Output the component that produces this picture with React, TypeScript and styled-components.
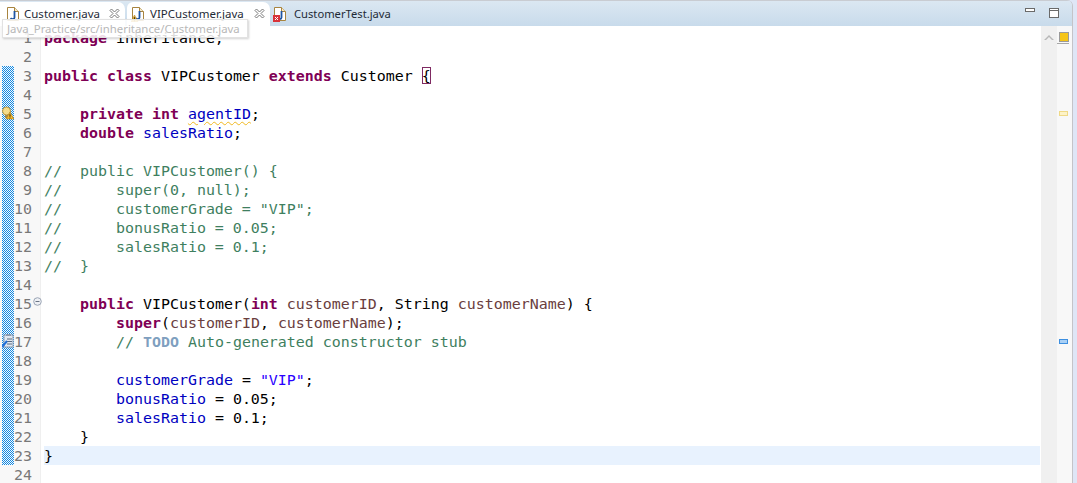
import styled, { createGlobalStyle } from "styled-components";

const GlobalStyle = createGlobalStyle`
  html, body {
    margin: 0;
    padding: 0;
    background: #fff;
  }
`;

const Page = styled.div`
  position: relative;
  width: 1077px;
  height: 483px;
  overflow: hidden;
  background: #dfe6f6;
  padding-right: 4px;
  box-sizing: border-box;
`;

const Frame = styled.div`
  height: 100%;
  display: flex;
  flex-direction: column;
  border-right: 1px solid #c4c4c8;
  border-top-right-radius: 6px;
  overflow: hidden;
`;

const TabBar = styled.div`
  height: 26px;
  flex: none;
  display: flex;
  align-items: stretch;
  padding-top: 1px;
  box-sizing: border-box;
  background: linear-gradient(#dbe7f2, #c8dbeb);
  border-top: 1px solid #c9ccd2;
`;

const Tab = styled.div<{ $kind: "plain" | "active" | "idle"; $width: number; $pad: number }>`
  width: ${(p) => p.$width}px;
  flex: none;
  box-sizing: border-box;
  display: flex;
  align-items: center;
  padding-left: ${(p) => p.$pad}px;
  padding-bottom: 1px;
  background: ${(p) => (p.$kind === "idle" ? "transparent" : "#fff")};
  border-top-left-radius: ${(p) => (p.$kind === "active" ? 6 : 0)}px;
  border-top-right-radius: ${(p) => (p.$kind === "idle" ? 0 : 7)}px;
  margin-right: ${(p) => (p.$kind === "plain" ? 2 : 0)}px;
`;

const TabLabel = styled.span<{ $gap: number; $size: number }>`
  margin-left: ${(p) => p.$gap}px;
  font-family: "Noto Sans", sans-serif;
  font-size: ${(p) => p.$size}px;
  color: #1e2a36;
  white-space: nowrap;
`;

const CloseIcon = styled.svg`
  margin-left: auto;
  margin-right: 5px;
  flex: none;
`;

const TabIconWrap = styled.span`
  position: relative;
  width: 14px;
  height: 16px;
  flex: none;
  display: block;
`;

const WindowControls = styled.div`
  margin-left: auto;
  padding: 6px 13px 0 0;
  display: flex;
  gap: 14px;
  align-items: flex-start;
`;

const Tooltip = styled.div`
  position: absolute;
  left: 2px;
  top: 19px;
  width: 246px;
  height: 19px;
  box-sizing: border-box;
  padding-left: 4px;
  background: rgba(255, 255, 255, 0.86);
  border: 1px solid #e2e2e2;
  box-shadow: 1px 1px 2px rgba(0, 0, 0, 0.18);
  font-family: "Noto Sans", sans-serif;
  font-size: 11.4px;
  line-height: 17px;
  color: #b8b8b8;
  white-space: nowrap;
`;

const Editor = styled.div`
  flex: 1;
  min-height: 0;
  display: flex;
  background: #fff;
`;

const LeftEdge = styled.div`
  width: 2px;
  flex: none;
  background: #f8f8f8;
`;

const ChangeRuler = styled.div`
  width: 12px;
  flex: none;
  padding-top: 40px;
  background: #f8f8f8;
`;

const ChangeBlock = styled.svg`
  display: block;
`;

const Numbers = styled.div`
  width: 27px;
  flex: none;
  padding-top: 2px;
  box-sizing: border-box;
  background: #f8f8f8;
  border-right: 1px solid #efefef;
`;

const NumberCell = styled.div`
  position: relative;
  height: 19px;
  width: 18px;
  text-align: right;
  font: 14.95px/21px "DejaVu Sans Mono", monospace;
  color: #787878;
`;

const FoldIcon = styled.svg`
  position: absolute;
  left: 19px;
  top: 3px;
`;

const Code = styled.div`
  flex: 1;
  min-width: 0;
  padding-top: 2px;
  margin-left: 3px;
  margin-right: 1px;
`;

const Line = styled.div<{ $current?: boolean }>`
  height: 19px;
  font: 14.95px/21px "DejaVu Sans Mono", monospace;
  white-space: pre;
  color: #000;
  background: ${(p) => (p.$current ? "#e8f2fe" : "transparent")};
`;

const Kw = styled.span`
  color: #7f0055;
  font-weight: bold;
`;

const Field = styled.span`
  color: #0000c0;
`;

const Param = styled.span`
  color: #6a3e3e;
`;

const Comment = styled.span`
  color: #3f7f5f;
`;

const Str = styled.span`
  color: #2a00ff;
`;

const Todo = styled.span`
  color: #7f9fbf;
  font-weight: bold;
`;

const Warn = styled.span`
  color: #0000c0;
  text-decoration: underline wavy #f0b820 1px;
  text-underline-offset: 2px;
`;

const Bracket = styled.span`
  display: inline-block;
  height: 17px;
  line-height: 19px;
  vertical-align: top;
  margin-top: 1px;
  outline: 1px solid #7f2a62;
  outline-offset: -1px;
`;

const ScrollTrack = styled.div`
  width: 16px;
  flex: none;
  background: #f0f0f0;
  display: flex;
  justify-content: center;
  padding-top: 8px;
  box-sizing: border-box;
`;

const Overview = styled.div`
  position: relative;
  width: 15px;
  flex: none;
  background: #f8f8f8;
`;

const StatusBox = styled.div`
  position: absolute;
  left: 2px;
  top: 6px;
  width: 8px;
  height: 8px;
  background: #f5c518;
  border: 1px solid #9a9a9a;
`;

const StatusRule = styled.div`
  position: absolute;
  left: 0;
  top: 17px;
  width: 12px;
  height: 1px;
  background: #a8a8a8;
`;

const Marker = styled.div<{ $top: number; $fill: string; $edge: string }>`
  position: absolute;
  left: 2px;
  top: ${(p) => p.$top}px;
  width: 7px;
  height: 3px;
  background: ${(p) => p.$fill};
  border: 1px solid ${(p) => p.$edge};
`;

const GutterIcon = styled.svg<{ $top: number }>`
  position: absolute;
  left: 2px;
  top: ${(p) => p.$top}px;
`;

function JavaFile({ error, warn }: { error?: boolean; warn?: boolean }) {
  return (
    <TabIconWrap>
      <svg width="14" height="16" viewBox="0 0 14 16">
        <path d="M1.5 1.5h7l4 4v9h-11z" fill="#fff" stroke="#a8843f" />
        <path d="M8.5 1.5v4h4" fill="#f5e9c8" stroke="#a8843f" />
        <path d="M8.5 5v6.5c0 1.8-2.8 2-4 .7" fill="none" stroke="#1f56a4" strokeWidth="1.8" />
        {error && (
          <g>
            <rect x="0" y="9" width="7" height="7" fill="#d8333a" />
            <path d="M2 11l3 3M5 11l-3 3" stroke="#fff" strokeWidth="1" />
          </g>
        )}
        {warn && (
          <g>
            <path d="M3.5 9l3.5 7H0z" fill="#e8b030" stroke="#a87a18" strokeWidth="0.5" />
            <path d="M3.5 11.2v2.4M3.5 14.4v.8" stroke="#3a2a08" strokeWidth="0.9" />
          </g>
        )}
      </svg>
    </TabIconWrap>
  );
}

function Close() {
  return (
    <CloseIcon width="11" height="11" viewBox="0 0 11 11">
      <path
        d="M1 2.5L2.5 1 5.5 4 8.5 1 10 2.5 7 5.5 10 8.5 8.5 10 5.5 7 2.5 10 1 8.5 4 5.5z"
        fill="#fff"
        stroke="#777"
      />
    </CloseIcon>
  );
}

const I = "    ";

const lines: React.ReactNode[] = [
  <><Kw>package</Kw> inheritance;</>,
  "",
  <><Kw>public</Kw> <Kw>class</Kw> VIPCustomer <Kw>extends</Kw> Customer <Bracket>{"{"}</Bracket></>,
  "",
  <>{I}<Kw>private</Kw> <Kw>int</Kw> <Warn>agentID</Warn>;</>,
  <>{I}<Kw>double</Kw> <Field>salesRatio</Field>;</>,
  "",
  <Comment>{"//  public VIPCustomer() {"}</Comment>,
  <Comment>{"//      super(0, null);"}</Comment>,
  <Comment>{'//      customerGrade = "VIP";'}</Comment>,
  <Comment>{"//      bonusRatio = 0.05;"}</Comment>,
  <Comment>{"//      salesRatio = 0.1;"}</Comment>,
  <Comment>{"//  }"}</Comment>,
  "",
  <>{I}<Kw>public</Kw> VIPCustomer(<Kw>int</Kw> <Param>customerID</Param>, String <Param>customerName</Param>) {"{"}</>,
  <>{I}{I}<Kw>super</Kw>(<Param>customerID</Param>, <Param>customerName</Param>);</>,
  <>{I}{I}<Comment>// </Comment><Todo>TODO</Todo><Comment> Auto-generated constructor stub</Comment></>,
  "",
  <>{I}{I}<Field>customerGrade</Field> = <Str>"VIP"</Str>;</>,
  <>{I}{I}<Field>bonusRatio</Field> = 0.05;</>,
  <>{I}{I}<Field>salesRatio</Field> = 0.1;</>,
  <>{I}{"}"}</>,
  "}",
  "",
];

export default function App() {
  return (
    <Page>
      <GlobalStyle />
      <Frame>
        <TabBar>
          <Tab $kind="plain" $width={125} $pad={6}>
            <JavaFile />
            <TabLabel $gap={4} $size={11.5}>Customer.java</TabLabel>
            <Close />
          </Tab>
          <Tab $kind="active" $width={143} $pad={4}>
            <JavaFile warn />
            <TabLabel $gap={5} $size={11.5}>VIPCustomer.java</TabLabel>
            <Close />
          </Tab>
          <Tab $kind="idle" $width={130} $pad={3}>
            <JavaFile error />
            <TabLabel $gap={7} $size={11.2}>CustomerTest.java</TabLabel>
          </Tab>
          <WindowControls>
            <svg width="10" height="5" viewBox="0 0 10 5">
              <rect x="0.5" y="0.5" width="9" height="3" fill="#fff" stroke="#6a6a6a" />
            </svg>
            <svg width="10" height="10" viewBox="0 0 10 10">
              <rect x="0.5" y="0.5" width="9" height="9" fill="#fff" stroke="#6a6a6a" />
              <path d="M0.5 2.5h9" stroke="#6a6a6a" />
            </svg>
          </WindowControls>
        </TabBar>
        <Editor>
          <LeftEdge />
          <ChangeRuler>
            <ChangeBlock width="12" height="399" shapeRendering="crispEdges">
              <defs>
                <pattern id="dither" width="2" height="2" patternUnits="userSpaceOnUse">
                  <rect width="2" height="2" fill="#f4fafe" />
                  <rect width="1" height="1" fill="#1488e0" />
                  <rect x="1" y="1" width="1" height="1" fill="#1488e0" />
                </pattern>
              </defs>
              <rect width="12" height="399" fill="url(#dither)" />
            </ChangeBlock>
          </ChangeRuler>
          <Numbers>
            {lines.map((_, i) => (
              <NumberCell key={i}>
                {i + 1}
                {i === 14 && (
                  <FoldIcon width="9" height="9" viewBox="0 0 9 9">
                    <circle cx="4.5" cy="4.5" r="3.8" fill="#eef0f4" stroke="#9aa4b4" />
                    <path d="M2.5 4.5h4" stroke="#6a7484" />
                  </FoldIcon>
                )}
              </NumberCell>
            ))}
          </Numbers>
          <Code>
            {lines.map((l, i) => (
              <Line key={i} $current={i === 22}>
                {l === "" ? " " : l}
              </Line>
            ))}
          </Code>
          <ScrollTrack>
            <svg width="10" height="6" viewBox="0 0 10 6">
              <path d="M0 6l5-5 5 5-2 0-3-3-3 3z" fill="#b8b8b8" />
            </svg>
          </ScrollTrack>
          <Overview>
            <StatusBox />
            <StatusRule />
            <Marker $top={85} $fill="#fdf3c8" $edge="#efd987" />
            <Marker $top={313} $fill="#a9d0f5" $edge="#3d8fe0" />
          </Overview>
        </Editor>
      </Frame>
      <GutterIcon $top={106} width="12" height="14" viewBox="0 0 12 14">
        <circle cx="4.5" cy="5" r="4" fill="#f6dc8a" stroke="#b89440" />
        <rect x="3" y="9" width="3" height="3" fill="#9a8a5a" />
        <path d="M8 6l4 7H4z" fill="#f0b428" stroke="#a87a18" strokeWidth="0.5" />
        <path d="M8 8.2v2.6M8 11.6v.8" stroke="#3a2a08" />
      </GutterIcon>
      <GutterIcon $top={334} width="12" height="14" viewBox="0 0 12 14">
        <rect x="2" y="1" width="9" height="12" fill="#dfe8f2" stroke="#8a9ab0" />
        <rect x="4" y="0" width="5" height="2" fill="#8a9ab0" />
        <path d="M5 5h5M5 7.5h5M5 10h5" stroke="#5a6a80" />
        <path d="M0 13l5-6" fill="none" stroke="#1f6fd8" strokeWidth="2" />
      </GutterIcon>
      <Tooltip>Java_Practice/src/inheritance/Customer.java</Tooltip>
    </Page>
  );
}
